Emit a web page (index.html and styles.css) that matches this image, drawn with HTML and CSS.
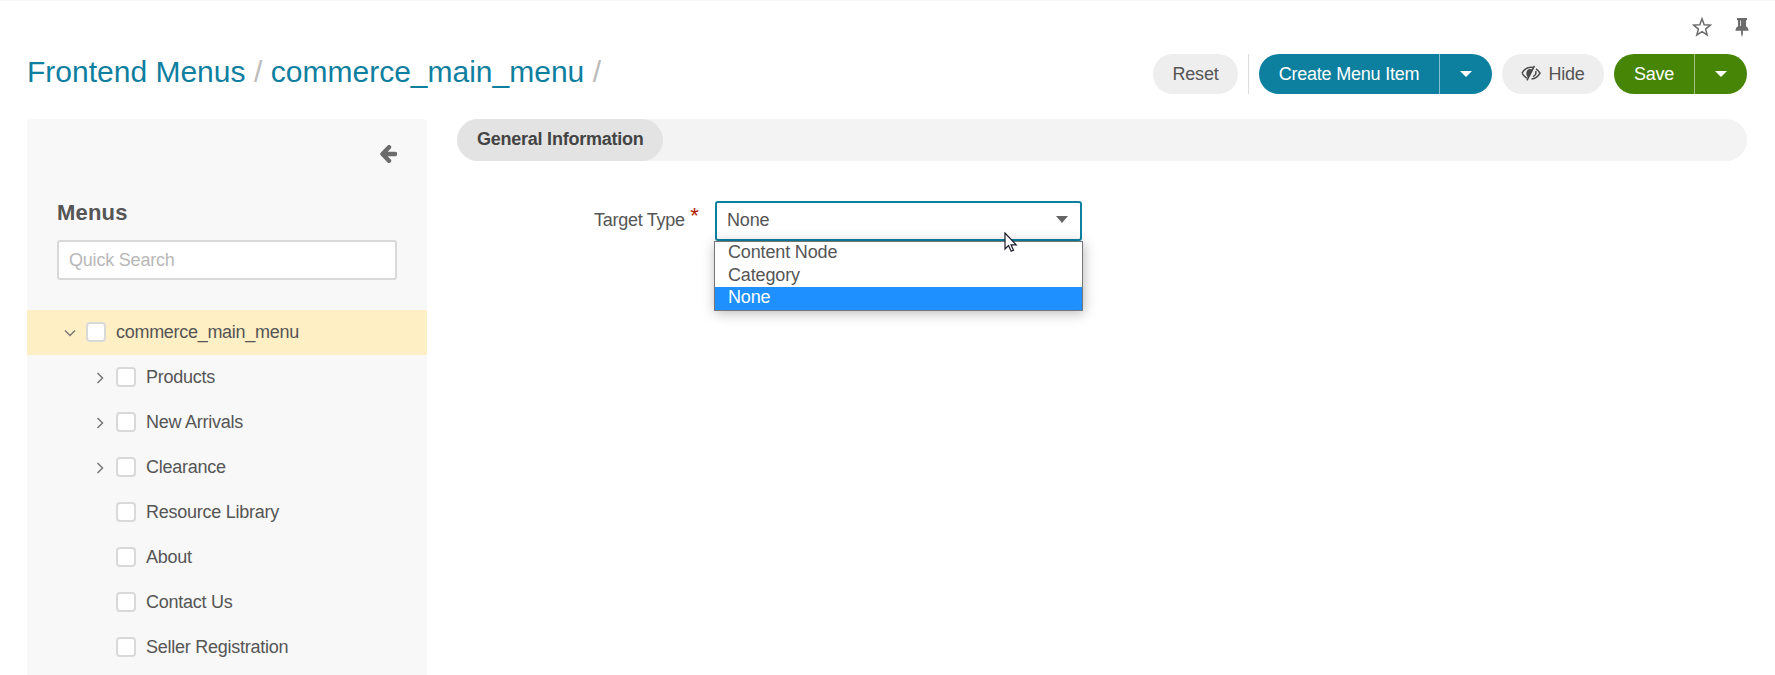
FILE: index.html
```html
<!DOCTYPE html>
<html lang="en">
<head>
<meta charset="utf-8">
<title>Frontend Menus</title>
<link rel="stylesheet" href="styles.css">
</head>
<body>
<div class="page">
  <div class="shortcuts">
    <svg class="star" width="20" height="20" viewBox="0 0 20 20"><path d="M10 1.800l2.200 5.900 6.200.4-4.800 4 1.600 5.900L10 14.700l-5.200 3.300 1.600-5.900-4.800-4 6.200-.4z"/></svg>
    <svg class="pin" width="14" height="20" viewBox="0 0 14 20"><path d="M2 1h10v2.200h-1v6.300c1.600.6 2.500 2 2.500 4.300H7.900V17L7 19.900 6.100 17v-3.200H.5c0-2.300.9-3.700 2.500-4.300V3.200H2z"/><path class="shine" d="M5.500 3.500v5.500"/></svg>
  </div>
  <header class="header">
    <h1 class="title"><a>Frontend Menus</a><span class="slash">/</span><a>commerce_main_menu</a><span class="slash">/</span></h1>
    <div class="actions">
      <button class="btn reset">Reset</button>
      <span class="divider"></span>
      <div class="group primary"><button class="main">Create Menu Item</button><button class="more"><span class="caret"></span></button></div>
      <button class="btn hide"><svg width="20" height="16" viewBox="0 0 20 16"><path class="line" d="M1 8.200C3 4.500 6 2.200 9.800 2.200c.8 0 1.500.1 2.200.3M1 8.200c1.200 2.200 3 4 5 5M15 3.800c1.700 1.100 3.100 2.600 4 4.400-2 3.500-5 5.600-8.500 5.900M13.500.8L6 15.300"/><path class="fill" d="M12 4.300L7.500 12.800C4.500 11 4.500 5.300 8 4z"/><path class="line" d="M14.800 6c.5 2.500-.8 4.700-2.800 5.600"/></svg>Hide</button>
      <div class="group success"><button class="main">Save</button><button class="more"><span class="caret"></span></button></div>
    </div>
  </header>
  <div class="body">
    <aside class="sidebar">
      <div class="collapse"><svg width="18" height="18" viewBox="0 0 18 18"><path d="M10 2.200L3.500 9l6.500 6.800M4 9h12"/></svg></div>
      <h2 class="heading">Menus</h2>
      <input class="search" placeholder="Quick Search">
      <ul class="tree">
        <li class="node root"><svg class="chev" width="12" height="12" viewBox="0 0 12 12"><path d="M1 3.500l5 5 5-5"/></svg><span class="check"></span>commerce_main_menu</li>
        <li class="node"><svg class="chev" width="12" height="12" viewBox="0 0 12 12"><path d="M3.500 1l5 5-5 5"/></svg><span class="check"></span>Products</li>
        <li class="node"><svg class="chev" width="12" height="12" viewBox="0 0 12 12"><path d="M3.500 1l5 5-5 5"/></svg><span class="check"></span>New Arrivals</li>
        <li class="node"><svg class="chev" width="12" height="12" viewBox="0 0 12 12"><path d="M3.500 1l5 5-5 5"/></svg><span class="check"></span>Clearance</li>
        <li class="node leaf"><span class="check"></span>Resource Library</li>
        <li class="node leaf"><span class="check"></span>About</li>
        <li class="node leaf"><span class="check"></span>Contact Us</li>
        <li class="node leaf"><span class="check"></span>Seller Registration</li>
      </ul>
    </aside>
    <main class="content">
      <nav class="tabs"><span class="tab">General Information</span></nav>
      <div class="field">
        <label class="label">Target Type<em class="required">*</em></label>
        <div class="select">
          <span>None</span><span class="caret"></span>
          <ul class="options"><li>Content Node</li><li>Category</li><li class="selected">None</li></ul>
          <svg class="cursor" width="14" height="21" viewBox="0 0 14 21"><path d="M1 1v16l3.500-3.500 2.700 5.700 2.300-1-2.500-5.400h5.200z"/></svg>
        </div>
      </div>
    </main>
  </div>
</div>
</body>
</html>
```
FILE: styles.css
```css
* { box-sizing: border-box; }
body {
  margin: 0;
  height: 675px;
  overflow: hidden;
  background: #fff;
  color: #555;
  font: 18px/22px "Liberation Sans", Arial, sans-serif;
}
button { font: inherit; color: inherit; letter-spacing: inherit; border: 0; margin: 0; }
ul { list-style: none; margin: 0; padding: 0; }
.page { border-top: 1px solid #f7f7f7; padding: 0 28px 0 27px; }
.shortcuts {
  display: flex;
  justify-content: flex-end;
  gap: 23px;
  height: 53px;
  padding: 16px 0 0;
  margin-right: -2px;
}
.star { fill: none; stroke: #6b6b6b; stroke-width: 1.5; }
.pin { fill: #6b6b6b; }
.shine { stroke: #ddd; stroke-width: 1; }
.header { display: flex; justify-content: space-between; height: 65px; }
.title { display: flex; margin: 0; font-size: 30px; line-height: 36px; font-weight: 400; color: #0f7f9f; }
.slash { color: #bbb; margin: 0 8.500px; }
.actions { display: flex; gap: 10px; height: 40px; letter-spacing: -.21px; }
.btn { display: flex; align-items: center; justify-content: center; background: #eee; border-radius: 20px; padding: 0; }
.reset { width: 85px; }
.hide { width: 102px; gap: 7px; }
.hide svg { position: relative; top: -1px; }
.line { fill: none; stroke: #4a4a4a; stroke-width: 1.500; }
.fill { fill: #4a4a4a; }
.divider { width: 1px; background: #ddd; }
.group { display: flex; color: #fff; border-radius: 20px; overflow: hidden; }
.group button { background: transparent; }
.primary { width: 233px; background: #0d80a0; }
.success { width: 133px; background: #468505; }
.main { flex: 1; padding: 0; }
.more { display: flex; align-items: center; justify-content: center; width: 53px; padding: 0; border-left: 1px solid rgba(255, 255, 255, .5); }
.caret { border: 6px solid transparent; border-top-color: currentColor; border-bottom: 0; }
.body { display: flex; gap: 30px; }
.sidebar { width: 400px; height: 556px; background: #f8f8f8; border-radius: 4px 4px 0 0; }
.collapse { display: flex; justify-content: flex-end; padding: 26px 30px 0 0; height: 82px; }
.collapse svg { fill: none; stroke: #6b6b6b; stroke-width: 4.400; stroke-linecap: round; stroke-linejoin: round; }
.heading { margin: 0 30px; font-size: 22px; line-height: 24px; height: 39px; letter-spacing: .2px; }
.search {
  display: block;
  width: 340px;
  height: 40px;
  margin: 0 30px 30px;
  padding: 0 10px;
  border: 2px solid #d9d9d9;
  border-radius: 3px;
  background: #fff;
  font: inherit;
  letter-spacing: -.2px;
}
.search::placeholder { color: #b8b8b8; }
.node { display: flex; align-items: center; height: 45px; padding: 0 0 2px 67px; letter-spacing: -.25px; }
.root { background: #ffefc5; padding-left: 37px; letter-spacing: -.29px; }
.leaf { padding-left: 89px; }
.chev { fill: none; stroke: #777; stroke-width: 1.500; margin-right: 10px; position: relative; top: 1px; }
.check { width: 20px; height: 20px; margin-right: 10px; border: 2px solid #d9d9d9; border-radius: 4px; background: #fff; }
.content { flex: 1; }
.tabs { display: flex; height: 42px; border-radius: 21px; background: #f3f3f3; }
.tab { width: 206px; padding: 9px 0 0 20px; border-radius: 21px; background: #e3e3e3; color: #444; font-weight: 700; letter-spacing: -.24px; }
.field { display: flex; padding: 40px 0 0 137px; }
.label { width: 121px; padding-top: 8px; letter-spacing: -.28px; }
.required { position: relative; top: -3px; margin-left: 5.500px; font: 22px/10px "Liberation Sans", Arial, sans-serif; color: #b01a00; }
.select {
  position: relative;
  display: flex;
  align-items: center;
  justify-content: space-between;
  width: 367px;
  height: 40px;
  padding: 0 12px 2px 10px;
  border: 2px solid #0d80a0;
  border-radius: 3px;
  letter-spacing: -.15px;
}
.select .caret { color: #666; border-top-width: 7px; position: relative; top: -1px; }
.options {
  position: absolute;
  left: -3px;
  top: 38px;
  width: 369px;
  border: 1px solid #767676;
  background: #fff;
  box-shadow: 1px 2px 12px rgba(0, 0, 0, .28);
}
.options li { height: 23px; line-height: 20px; padding-left: 13px; }
.options li:nth-child(2) { height: 22px; }
.options .selected { background: #1e90ff; color: #fff; height: 23px; }
.cursor { position: absolute; left: 287px; top: 29px; fill: #fff; stroke: #1a1a2a; stroke-width: 1.200; }
```
